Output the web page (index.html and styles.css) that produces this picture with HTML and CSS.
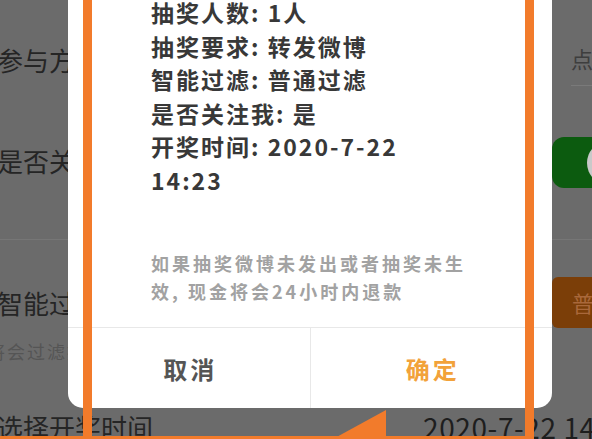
FILE: index.html
```html
<!DOCTYPE html>
<html lang="zh-CN">
<head>
<meta charset="utf-8">
<title>抽奖确认</title>
<link rel="stylesheet" href="styles.css">
</head>
<body>
<div class="screen">
  <div class="page">
    <div class="row row-way">
      <span class="label">参与方式</span>
      <span class="picker">点击选择</span>
    </div>
    <div class="row row-follow">
      <span class="label">是否关注我</span>
      <span class="toggle"><span class="knob"></span></span>
    </div>
    <div class="row row-filter">
      <div class="filter-text">
        <span class="label">智能过滤</span>
        <span class="sub">将会过滤掉抽奖机器人</span>
      </div>
      <span class="chip">普通过滤</span>
    </div>
    <div class="row row-time">
      <span class="label">选择开奖时间</span>
      <span class="value">2020-7-22 14:23</span>
    </div>
  </div>

  <div class="dialog">
    <div class="dialog-body">
      <div class="info">
        <div>抽奖人数: 1人</div>
        <div>抽奖要求: 转发微博</div>
        <div>智能过滤: 普通过滤</div>
        <div>是否关注我: 是</div>
        <div>开奖时间: 2020-7-22 14:23</div>
      </div>
      <p class="notice">如果抽奖微博未发出或者抽奖未生效, 现金将会24小时内退款</p>
    </div>
    <div class="actions">
      <button class="btn btn-cancel">取消</button>
      <button class="btn btn-ok">确定</button>
    </div>
  </div>

  <svg class="annot" width="592" height="439" viewBox="0 0 592 439">
    <rect x="83" y="0" width="9" height="439" fill="#f27b2b"/>
    <rect x="525" y="0" width="9" height="439" fill="#f27b2b"/>
    <rect x="0" y="436" width="534" height="3" fill="#f27b2b"/>
    <polygon points="386,410 386,439 333,439" fill="#f27b2b"/>
  </svg>
</div>
</body>
</html>
```
FILE: styles.css
```css
html, body {
  margin: 0;
  padding: 0;
}
body {
  width: 592px;
  height: 439px;
  overflow: hidden;
  background: #6b6b6b;
  font-family: "Noto Sans CJK SC", "Noto Sans", sans-serif;
}
.screen {
  position: relative;
  width: 592px;
  height: 439px;
  overflow: hidden;
}

/* background page (dimmed) */
.page {
  margin-left: -3px;
  width: 640px;
  display: flex;
  flex-direction: column;
}
.row {
  display: flex;
  align-items: flex-start;
  box-sizing: border-box;
}
.label {
  flex: 1;
  font-size: 26px;
  line-height: 30px;
  color: #252525;
  white-space: nowrap;
}
.row-way {
  height: 120px;
  padding-top: 45px;
}
.picker {
  width: 66px;
  margin-top: -2px;
  padding-bottom: 12px;
  font-size: 22px;
  line-height: 30px;
  color: #3e3e3e;
  white-space: nowrap;
  overflow: hidden;
  border-bottom: 1px solid #7a7a7a;
}
.row-follow {
  height: 120px;
  padding-top: 26px;
  border-bottom: 1px solid #767676;
}
.toggle {
  width: 85px;
  height: 51px;
  margin-top: -9px;
  background: #0c5b0f;
  border-radius: 12px;
  display: flex;
  align-items: center;
  padding-left: 35px;
  box-sizing: border-box;
}
.knob {
  width: 44px;
  height: 44px;
  border-radius: 50%;
  background: #c9c9c9;
}
.row-filter {
  height: 170px;
  padding-top: 48px;
}
.filter-text {
  flex: 1;
  display: flex;
  flex-direction: column;
}
.sub {
  margin-top: 23px;
  margin-left: -10px;
  font-size: 18px;
  line-height: 20px;
  letter-spacing: 2px;
  color: #555;
  white-space: nowrap;
}
.chip {
  width: 85px;
  height: 51px;
  margin-top: -11px;
  background: #7b3e08;
  border-radius: 6px 0 0 6px;
  box-sizing: border-box;
  padding-left: 20px;
  font-size: 22px;
  line-height: 51px;
  color: #a9683a;
  white-space: nowrap;
  overflow: hidden;
}
.row-time {
  padding-top: 2px;
}
.value {
  width: 214px;
  font-size: 28px;
  line-height: 30px;
  letter-spacing: 0.6px;
  color: #1e1e1e;
  white-space: nowrap;
}

/* modal dialog */
.dialog {
  position: absolute;
  left: 68px;
  top: -20px;
  width: 484px;
  height: 428px;
  background: #fff;
  border-radius: 0 0 15px 15px;
  display: flex;
  flex-direction: column;
}
.dialog-body {
  padding: 16px 83px 0 83px;
  flex: 1;
}
.info {
  font-size: 23px;
  font-weight: 700;
  letter-spacing: 2px;
  line-height: 33.6px;
  color: #383838;
}
.notice {
  margin: 51px 0 0 0;
  font-size: 18px;
  font-weight: 700;
  letter-spacing: 3px;
  line-height: 28px;
  color: #a2a2a2;
}
.actions {
  display: flex;
  height: 80px;
  border-top: 1px solid #e8e8e8;
}
.btn {
  flex: 1;
  border: none;
  background: transparent;
  font-family: inherit;
  font-size: 24px;
  font-weight: 700;
  letter-spacing: 3px;
  padding: 0 0 0 3px;
  margin: 0;
}
.btn-cancel {
  color: #555;
  border-right: 1px solid #e8e8e8;
}
.btn-ok {
  color: #f2a23a;
}

/* annotation marks */
.annot {
  position: absolute;
  left: 0;
  top: 0;
  pointer-events: none;
}
```
